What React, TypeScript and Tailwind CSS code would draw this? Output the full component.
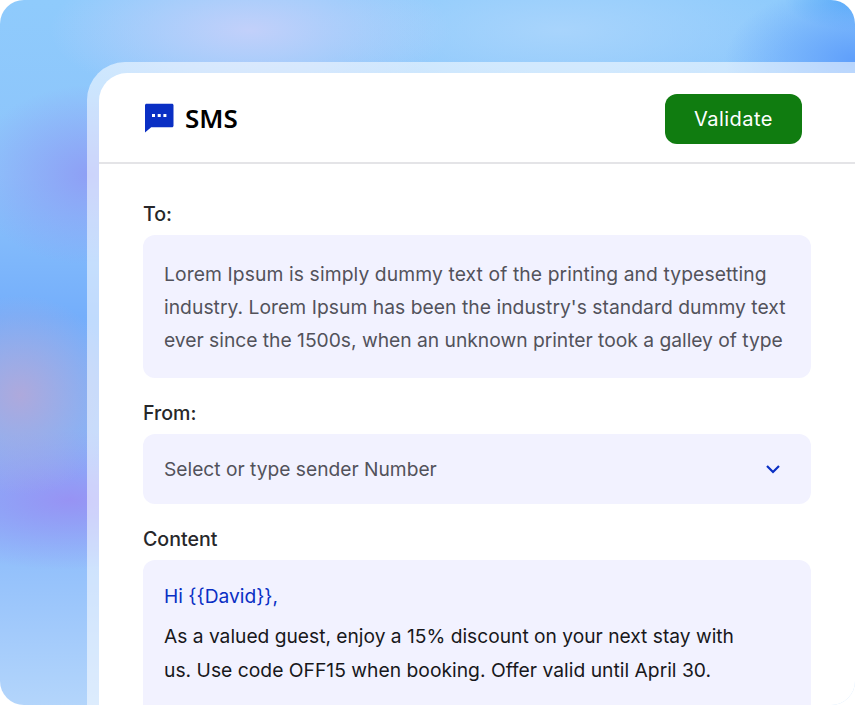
const font = { fontFamily: "Inter, sans-serif" };

function SmsIcon() {
  return (
    <svg width="30" height="30" viewBox="0 0 30 30" className="shrink-0">
      <path
        d="M2.5 0.8H28C28.8 0.8 29.5 1.5 29.5 2.3V22.7C29.5 23.5 28.8 24.2 28 24.2H7.2L1 29.5V2.3C1 1.5 1.7 0.8 2.5 0.8Z"
        fill="#0a2fc4"
      />
      <rect x="8" y="11" width="3" height="3" fill="#fff" />
      <rect x="13.7" y="11" width="3" height="3" fill="#fff" />
      <rect x="19.4" y="11" width="3" height="3" fill="#fff" />
    </svg>
  );
}

function Label(props: { children: string; className?: string }) {
  return <div className={"text-[19.6px] font-[450] leading-[24px] text-[#27272a] " + (props.className ?? "")}>{props.children}</div>;
}

export default function App() {
  return (
    <div style={font} className="h-[705px] w-[855px] overflow-hidden bg-white">
      <div className="h-[705px] w-[855px] overflow-hidden rounded-[24px] bg-[radial-gradient(ellipse_100px_100px_at_20px_395px,#aea9dc_0%,transparent_100%),radial-gradient(ellipse_180px_70px_at_70px_500px,#9793f4_0%,transparent_100%),radial-gradient(ellipse_120px_90px_at_90px_175px,#8e9ff5_0%,transparent_100%),radial-gradient(ellipse_200px_75px_at_250px_30px,#c2d0fa_0%,transparent_100%),radial-gradient(ellipse_130px_75px_at_855px_60px,#5f9ffb_0%,transparent_100%),radial-gradient(ellipse_70px_30px_at_855px_0px,#58aef8_0%,transparent_100%),radial-gradient(ellipse_240px_70px_at_560px_30px,#a8d4fc_0%,transparent_100%),linear-gradient(180deg,#8fcbfc_0%,#8dc4fb_25%,#74aefb_45%,#86b8fb_72%,#b3d5fb_100%)] pl-[87px] pt-[62px]">
        <div className="h-[700px] rounded-tl-[38px] bg-white/55 pl-[12px] pt-[11px]">
          <div className="h-[700px] rounded-tl-[28px] bg-white">
            <div className="flex h-[91px] items-center justify-between border-b-2 border-[#e4e4e7] pl-[45px] pr-[53px]">
              <div className="flex items-center gap-[11px]">
                <SmsIcon />
                <span style={{ fontFamily: "'Noto Sans', sans-serif" }} className="text-[26px] font-semibold leading-none text-black">SMS</span>
              </div>
              <button className="mt-[2px] h-[50px] w-[137px] rounded-[12px] bg-[#107c10] text-[20px] tracking-[0.45px] text-white">Validate</button>
            </div>
            <div className="px-[44px] pt-[38px]">
              <Label>To:</Label>
              <div className="mt-[9px] h-[143px] w-[668px] rounded-[12px] bg-[#f2f2ff] px-[21px] pt-[23px] text-[19.3px] leading-[33px] text-[#52525b]">
                <p className="whitespace-nowrap tracking-[0.1px]">Lorem Ipsum is simply dummy text of the printing and typesetting</p>
                <p className="whitespace-nowrap tracking-[0.03px]">industry. Lorem Ipsum has been the industry's standard dummy text</p>
                <p className="whitespace-nowrap tracking-[-0.03px]">ever since the 1500s, when an unknown printer took a galley of type</p>
              </div>
              <Label className="mt-[23px]">From:</Label>
              <div className="mt-[9px] flex h-[70px] w-[668px] items-center justify-between rounded-[12px] bg-[#f2f2ff] pl-[21px] pr-[30px] text-[19.2px] text-[#52525b]">
                <span>Select or type sender Number</span>
                <svg width="16" height="10" viewBox="0 0 16 10" fill="none">
                  <path d="M2 2L8 8L14 2" stroke="#0a2fc4" strokeWidth="2.2" />
                </svg>
              </div>
              <Label className="mt-[23px]">Content</Label>
              <div className="mt-[9px] h-[200px] w-[668px] rounded-[12px] bg-[#f2f2ff] px-[21px] pt-[22px] text-[19.2px] leading-[33px] text-[#18181b]">
                <p className="leading-[28px] text-[#0a2fc4]">Hi {"{{David}}"},</p>
                <p className="mt-[10px] whitespace-nowrap">As a valued guest, enjoy a 15% discount on your next stay with</p>
                <p className="mt-[1px] whitespace-nowrap text-[19.3px]">us. Use code OFF15 when booking. Offer valid until April 30.</p>
              </div>
            </div>
          </div>
        </div>
      </div>
    </div>
  );
}
